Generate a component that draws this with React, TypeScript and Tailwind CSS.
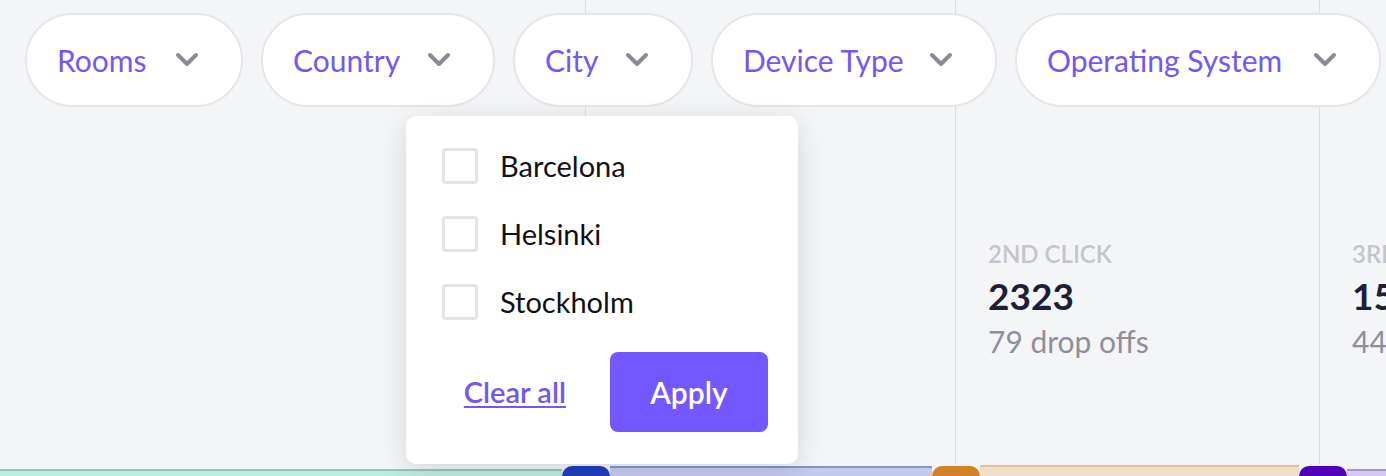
import { useState } from "react";

const filters = [
  { label: "Rooms", w: "w-[218px]" },
  { label: "Country", w: "w-[234px]" },
  { label: "City", w: "w-[180px]" },
  { label: "Device Type", w: "w-[286px]" },
  { label: "Operating System", w: "w-[366px]" },
];

const cities = ["Barcelona", "Helsinki", "Stockholm"];

function Chevron() {
  return (
    <svg width="24" height="16" viewBox="0 0 24 16" fill="none">
      <path d="M3 3 L12 12 L21 3" stroke="#8b8a96" strokeWidth="4" strokeLinecap="round" strokeLinejoin="round" />
    </svg>
  );
}

function Stat({ title, value, drops }: { title: string; value: string; drops: string }) {
  return (
    <div className="flex flex-col pt-[240px] pl-[32px] whitespace-nowrap">
      <span className="text-[24px] leading-[28px] font-semibold uppercase text-[#c4c5cb]">{title}</span>
      <span className="mt-[6px] text-[37px] leading-[44px] font-bold text-[#1e1f36]">{value}</span>
      <span className="mt-[6px] text-[30px] leading-[34px] text-[#8f8f9a]">{drops}</span>
    </div>
  );
}

export default function App() {
  const [checked, setChecked] = useState<Record<string, boolean>>({});

  return (
    <div className="w-[1386px] h-[476px] overflow-hidden bg-[#f4f5f7] font-['Lato','Liberation_Sans',sans-serif] grid">
      {/* funnel chart */}
      <div className="col-start-1 row-start-1 flex flex-col">
        <div className="flex h-[465px]">
          <div className="w-[585px] shrink-0" />
          <div className="w-[370px] shrink-0 border-l border-[#dcdde1]" />
          <div className="w-[364px] shrink-0 border-l border-[#dcdde1]">
            <Stat title="2nd click" value="2323" drops="79 drop offs" />
          </div>
          <div className="flex-1 border-l border-[#dcdde1]">
            <Stat title="3rd click" value="1548" drops="44 drop offs" />
          </div>
        </div>
        <div className="flex h-[11px] items-end">
          <div className="w-[562px] h-[7px] border-t-2 border-[#7fcfbf] bg-[#c4e8e0]" />
          <div className="w-[48px] h-[10px] rounded-t-[12px] bg-[#1e40c0]" />
          <div className="w-[322px] h-[10px] border-t-2 border-[#7d96de] bg-[#c5cbeb]" />
          <div className="w-[48px] h-[10px] rounded-t-[12px] bg-[#d28126]" />
          <div className="w-[319px] h-[11px] border-t-2 border-[#e6bf94] bg-[#f0dfcb]" />
          <div className="w-[48px] h-[10px] rounded-t-[12px] bg-[#5000b6]" />
          <div className="flex-1 h-[7px] border-t-2 border-[#a98fe0] bg-[#d8c9ef]" />
        </div>
      </div>

      {/* filters */}
      <div className="col-start-1 row-start-1 relative">
        <div className="flex gap-[18px] pt-[13px] pl-[25px]">
          {filters.map((f) => (
            <button
              key={f.label}
              className={`${f.w} h-[94px] shrink-0 rounded-full border-2 border-[#e5e6ea] bg-white flex items-center justify-between pl-[30px] pr-[42px] text-[30px] text-[#7257f8] whitespace-nowrap`}
            >
              <span>{f.label}</span>
              <Chevron />
            </button>
          ))}
        </div>

        <div className="absolute left-[406px] top-[116px] w-[392px] h-[348px] rounded-[10px] bg-white shadow-[0_6px_28px_rgba(0,0,0,0.13)] flex flex-col pl-[36px] pr-[30px] pt-[32px]">
          <div className="flex flex-col gap-[32px]">
            {cities.map((c) => (
              <label key={c} className="flex items-center gap-[22px] h-[36px] cursor-pointer">
                <span
                  onClick={() => setChecked({ ...checked, [c]: !checked[c] })}
                  className={`w-[36px] h-[36px] rounded-[4px] border-[3px] ${checked[c] ? "border-[#7458ff] bg-[#7458ff]" : "border-[#e3e4e8] bg-white"}`}
                />
                <span className="text-[29px] text-[#111111]">{c}</span>
              </label>
            ))}
          </div>
          <div className="mt-[32px] flex items-center justify-end gap-[44px]">
            <button onClick={() => setChecked({})} className="text-[29px] font-semibold text-[#7257f8] underline underline-offset-[3px]">
              Clear all
            </button>
            <button className="w-[158px] h-[80px] rounded-[8px] bg-[#7458ff] text-[30px] font-semibold text-white">
              Apply
            </button>
          </div>
        </div>
      </div>
    </div>
  );
}
